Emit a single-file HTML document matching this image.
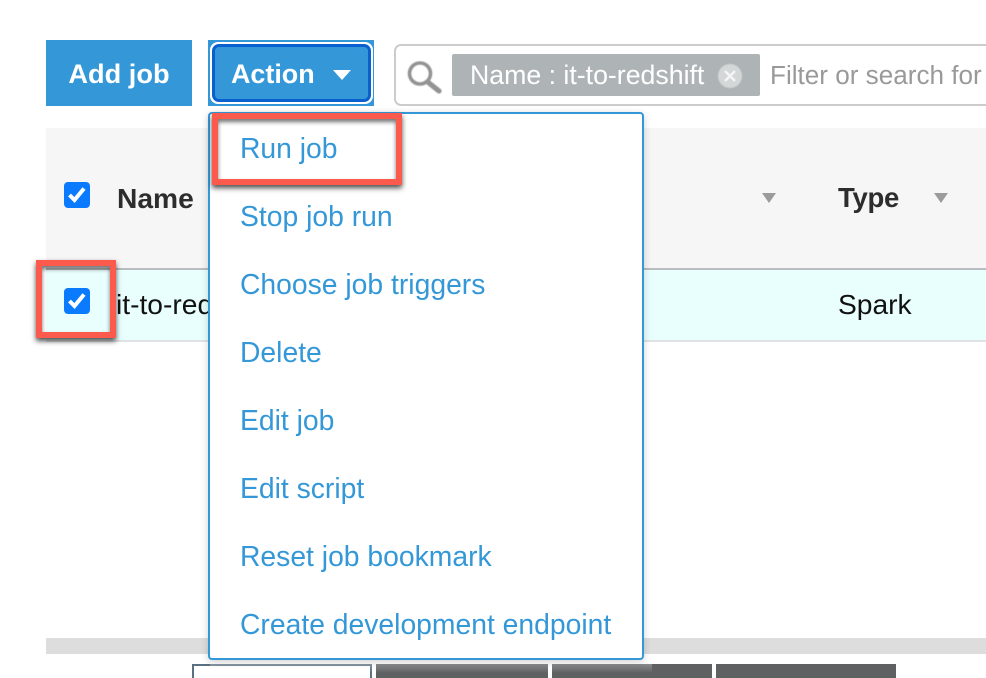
<!DOCTYPE html>
<html>
<head>
<meta charset="utf-8">
<style>
html,body{margin:0;padding:0;background:#fff;width:986px;height:678px;overflow:hidden;}
#p{position:relative;width:986px;height:678px;overflow:hidden;font-family:"Liberation Sans",sans-serif;}
.a{position:absolute;white-space:nowrap;}
.item{position:absolute;left:240px;color:#3498d8;font-size:28.3px;line-height:36px;white-space:nowrap;}
.cb{position:absolute;width:26px;height:26px;background:#0a7bff;border-radius:4px;}
.cb svg{position:absolute;left:0;top:0;}
.red{position:absolute;box-sizing:border-box;border:6px solid #fc5a4c;box-shadow:0 3px 5px rgba(0,0,0,.7),inset 0 3px 4px rgba(0,0,0,.55);}
.tri{position:absolute;width:0;height:0;border-left:7px solid transparent;border-right:7px solid transparent;border-top:10px solid #9b9b9b;}
</style>
</head>
<body>
<div id="p">
<!-- toolbar -->
<div class="a" style="left:46px;top:40px;width:146px;height:66px;background:#3498d8;color:#fff;font-weight:bold;font-size:27.2px;line-height:68px;text-align:center;">Add job</div>
<div class="a" style="left:208px;top:40px;width:166px;height:66px;background:#3498d8;"></div>
<div class="a" style="left:210px;top:42px;width:163px;height:62px;box-sizing:border-box;background:#fff;border-radius:8px;"></div>
<div class="a" style="left:212px;top:44px;width:159px;height:58px;box-sizing:border-box;background:#3498d8;border:3px solid #0a60cf;border-radius:7px;"></div>
<div class="a" style="left:231px;top:40px;color:#fff;font-weight:bold;font-size:26.9px;line-height:68px;">Action</div>
<div class="a" style="left:333px;top:70px;width:0;height:0;border-left:9.5px solid transparent;border-right:9.5px solid transparent;border-top:10px solid #fff;"></div>
<!-- search -->
<div class="a" style="left:394px;top:44px;width:640px;height:62px;box-sizing:border-box;border:2px solid #ccc;border-radius:7px;background:#fff;"></div>
<svg class="a" style="left:400px;top:50px;filter:blur(.5px);" width="50" height="50" viewBox="0 0 50 50"><circle cx="20" cy="23.5" r="10.5" fill="none" stroke="#939393" stroke-width="3.6"/><path d="M29 33L39 41" stroke="#939393" stroke-width="5.2" stroke-linecap="round"/></svg>
<div class="a" style="left:452px;top:54px;width:308px;height:42px;background:#aeb4b5;border-radius:2px;"></div>
<div class="a" style="left:470px;top:54px;color:#fff;font-size:26.7px;line-height:43px;">Name : it-to-redshift</div>
<div class="a" style="left:718px;top:64px;width:24px;height:24px;border-radius:50%;background:#d4d7d8;filter:blur(.5px);"></div>
<svg class="a" style="left:718px;top:64px;" width="24" height="24" viewBox="0 0 24 24"><path d="M7 7L17 17M17 7L7 17" stroke="#f4f5f5" stroke-width="2.4"/></svg>
<div class="a" style="left:770px;top:54px;color:#999;font-size:26.1px;line-height:43px;">Filter or search for</div>
<!-- table -->
<div class="a" style="left:46px;top:128px;width:940px;height:140px;background:#f6f6f6;"></div>
<div class="a" style="left:46px;top:268px;width:940px;height:2px;background:#b9bdbf;"></div>
<div class="a" style="left:46px;top:270px;width:940px;height:70px;background:#e9fffe;"></div>
<div class="a" style="left:46px;top:340px;width:940px;height:2px;background:#dfe3e5;"></div>
<div class="cb" style="left:64px;top:182px;"><svg width="26" height="26" viewBox="0 0 26 26"><path d="M5.5 13L10.5 18L20 6.5" fill="none" stroke="#fff" stroke-width="4"/></svg></div>
<div class="a" style="left:117px;top:180px;font-weight:bold;color:#2d2d2d;font-size:28.2px;line-height:36px;">Name</div>
<div class="tri" style="left:762px;top:193px;"></div>
<div class="a" style="left:838px;top:180px;font-weight:bold;color:#2d2d2d;font-size:27.5px;line-height:36px;letter-spacing:-.3px;">Type</div>
<div class="tri" style="left:934px;top:193px;"></div>
<div class="cb" style="left:64px;top:288px;"><svg width="26" height="26" viewBox="0 0 26 26"><path d="M5.5 13L10.5 18L20 6.5" fill="none" stroke="#fff" stroke-width="4"/></svg></div>
<div class="a" style="left:116px;top:286px;color:#111;font-size:28.2px;line-height:36px;">it-to-redshift</div>
<div class="a" style="left:838px;top:286px;color:#111;font-size:28.2px;line-height:36px;">Spark</div>
<!-- bottom -->
<div class="a" style="left:46px;top:638px;width:940px;height:16px;background:#ddd;"></div>
<div class="a" style="left:192px;top:664px;width:180px;height:14px;box-sizing:border-box;border:2px solid #5a7183;border-bottom:0;background:#fff;"></div>
<div class="a" style="left:376px;top:664px;width:172px;height:14px;background:#5f6062;"></div>
<div class="a" style="left:552px;top:664px;width:160px;height:14px;background:#5f6062;"></div>
<div class="a" style="left:716px;top:664px;width:180px;height:14px;background:#5f6062;"></div>
<div class="a" style="left:210px;top:664px;width:442px;height:9px;background:linear-gradient(rgba(255,255,255,.28),rgba(255,255,255,0));"></div>
<!-- menu -->
<div class="a" style="left:208px;top:112px;width:436px;height:548px;box-sizing:border-box;background:#fff;border:2px solid #3498d8;border-radius:4px;box-shadow:0 2px 8px rgba(0,0,0,.18);"></div>
<div class="item" style="top:130px;">Run job</div>
<div class="item" style="top:198px;">Stop job run</div>
<div class="item" style="top:266px;">Choose job triggers</div>
<div class="item" style="top:334px;">Delete</div>
<div class="item" style="top:402px;">Edit job</div>
<div class="item" style="top:470px;">Edit script</div>
<div class="item" style="top:538px;">Reset job bookmark</div>
<div class="item" style="top:606px;">Create development endpoint</div>
<!-- highlights -->
<div class="red" style="left:212px;top:113px;width:190px;height:72px;"></div>
<div class="red" style="left:36px;top:260px;width:80px;height:78px;"></div>
</div>
</body>
</html>
